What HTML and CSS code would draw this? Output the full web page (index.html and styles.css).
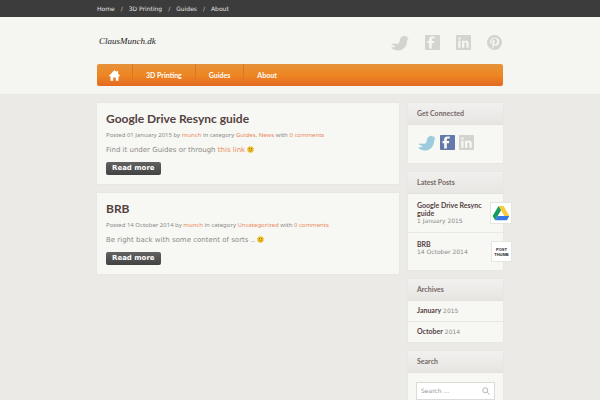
FILE: index.html
```html
<!DOCTYPE html>
<html lang="en">
<head>
<meta charset="utf-8">
<meta name="viewport" content="width=device-width, initial-scale=1">
<title>ClausMunch.dk</title>
<link rel="stylesheet" href="styles.css">
</head>
<body>
<svg class="defs" aria-hidden="true">
  <symbol id="bird" viewBox="0 0 24 20"><path d="M1 15.500c3 .3 5-.5 6.500-1.800C5 13.500 3 12.500 2 10.800c1.500.3 3 .1 4-.3C9 12 12 10.500 12.300 7 12.500 3.500 15 1 18 .8c1 0 1.500.7 2.200 1.200l2.600-.5-1.500 2.500 2.500.5-2.300 2.200C22 13 17 19.500 10 19.500c-4 0-7-1.500-9-4z"/></symbol>
  <symbol id="fb" viewBox="0 0 20 20"><path fill-rule="evenodd" d="M1 0h18q1 0 1 1v18q0 1-1 1H1q-1 0-1-1V1q0-1 1-1zM5.500 18h3.600v-7H12l.4-3H9.100V6.300c0-1 .4-1.500 1.600-1.500H13V2H10C7 2 5.500 3.500 5.500 6v2H3.300v3h2.200z"/></symbol>
  <symbol id="li" viewBox="0 0 20 20"><path fill-rule="evenodd" d="M1 0h18q1 0 1 1v18q0 1-1 1H1q-1 0-1-1V1q0-1 1-1zM3 7.500V17h3V7.500zM3 3.200V6h3V3.200zM8 7.500V17h3v-5c0-2.500 3-2.500 3 0v5h3v-6c0-4-4.500-4.500-6-2.200V7.500z"/></symbol>
  <symbol id="pin" viewBox="0 0 20 20"><path fill-rule="evenodd" d="M10 0a10 10 0 1 1 0 20A10 10 0 0 1 10 0zM7.200 18.500l.8-.3 1.500-4.500c4 2 7-1.200 6.700-5.500C16 1.500 4 1.500 4 8.500c0 1.700.7 3 2 3.500l.6-1.500C4.500 6 8 4.500 10 4.500c5.500 0 3.700 8.500.4 7.800-2.400-.5.600-3.500-.3-5.300C9 5 6.500 7 7.500 10z"/></symbol>
  <symbol id="smile" viewBox="0 0 16 16"><circle cx="8" cy="8" r="7.500" fill="#f2c52e"/><ellipse cx="5.300" cy="6" rx="1.200" ry="1.700" fill="#6b4a20"/><ellipse cx="10.700" cy="6" rx="1.200" ry="1.700" fill="#6b4a20"/><path d="M4 10q4 4 8 0" fill="none" stroke="#8a6420" stroke-width="1.300"/></symbol>
</svg>

<div class="topbar">
  <nav class="wrap topnav" aria-label="Top">
    <a href="#">Home</a><span>/</span><a href="#">3D Printing</a><span>/</span><a href="#">Guides</a><span>/</span><a href="#">About</a>
  </nav>
</div>

<header class="header">
  <div class="wrap">
    <div class="brand">
      <a class="logo" href="#">ClausMunch.dk</a>
      <div class="social">
        <a href="#" aria-label="Twitter"><svg class="bird"><use href="#bird"/></svg></a>
        <a href="#" aria-label="Facebook"><svg><use href="#fb"/></svg></a>
        <a href="#" aria-label="LinkedIn"><svg><use href="#li"/></svg></a>
        <a href="#" aria-label="Pinterest"><svg><use href="#pin"/></svg></a>
      </div>
    </div>
    <nav class="mainnav" aria-label="Main">
      <a href="#" aria-label="Front page"><svg viewBox="0 0 22 22"><path fill="#fff" d="M11 0l4 4V2h3v5l4 4.500-1.500 1.500L19 12v9.500h-5.500V15h-5v6.500H3V12l-1.500 1L0 11.500z"/></svg></a>
      <a href="#">3D Printing</a>
      <a href="#">Guides</a>
      <a href="#">About</a>
    </nav>
  </div>
</header>

<div class="wrap columns">
  <main>
    <article class="card post">
      <h2>Google Drive Resync guide</h2>
      <p class="meta">Posted 01 January 2015 by <a href="#">munch</a> in category <a href="#">Guides</a>, <a href="#">News</a> with <a href="#">0 comments</a></p>
      <p class="text">Find it under Guides or through <a href="#">this link</a> <svg><use href="#smile"/></svg></p>
      <a class="more" href="#">Read more</a>
    </article>
    <article class="card post">
      <h2>BRB</h2>
      <p class="meta">Posted 14 October 2014 by <a href="#">munch</a> in category <a href="#">Uncategorized</a> with <a href="#">0 comments</a></p>
      <p class="text">Be right back with some content of sorts .. <svg><use href="#smile"/></svg></p>
      <a class="more" href="#">Read more</a>
    </article>
  </main>

  <aside>
    <section class="card">
      <h3>Get Connected</h3>
      <div class="connect">
        <a class="tw" href="#" aria-label="Twitter"><svg class="bird"><use href="#bird"/></svg></a>
        <a class="fb" href="#" aria-label="Facebook"><svg><use href="#fb"/></svg></a>
        <a class="in" href="#" aria-label="LinkedIn"><svg><use href="#li"/></svg></a>
      </div>
    </section>
    <section class="card">
      <h3>Latest Posts</h3>
      <ul class="latest">
        <li>
          <div><a href="#">Google Drive Resync guide</a><span>1 January 2015</span></div>
          <svg class="thumb drive" viewBox="0 0 24 24"><path fill="#f8ca3c" d="M9 3.500h6l7 12h-6z"/><path fill="#159c5b" d="M9 3.500l3 5.200-7 12-3-5.200z"/><path fill="#3777e3" d="M8 15.500h14l-3 5.200H5z"/></svg>
        </li>
        <li>
          <div><a href="#">BRB</a><span>14 October 2014</span></div>
          <span class="thumb none">POST THUMB</span>
        </li>
      </ul>
    </section>
    <section class="card">
      <h3>Archives</h3>
      <ul class="archive">
        <li><a href="#">January</a> 2015</li>
        <li><a href="#">October</a> 2014</li>
      </ul>
    </section>
    <section class="card">
      <h3>Search</h3>
      <form class="search">
        <input type="search" placeholder="Search ..." aria-label="Search">
        <button type="submit" aria-label="Search"><svg viewBox="0 0 16 16"><circle cx="6.500" cy="6.500" r="5"/><path d="M10.500 10.500L15 15"/></svg></button>
      </form>
    </section>
  </aside>
</div>
</body>
</html>
```

FILE: styles.css
```css
* { box-sizing: border-box; }

body {
  margin: 0;
  background: #ebeae7;
  color: #8d8b88;
  font: 7px/12px "DejaVu Sans", sans-serif;
}

a { color: #e98a5b; text-decoration: none; }
h2, h3, p, ul { margin: 0; padding: 0; font-weight: normal; }
ul { list-style: none; }
svg { display: block; width: 15px; height: 15px; fill: currentColor; }
.defs { position: absolute; width: 0; height: 0; }
svg.bird { width: 19px; height: 16px; }

.wrap { max-width: 406px; margin: 0 auto; }

.topbar { background: #3c3c3c; }
.topnav { display: flex; gap: 6px; font-size: 6px; line-height: 17px; color: #c8c8c8; }
.topnav a { color: #e2e2e2; }

.header { background: #f5f5f2; padding-bottom: 8px; }
.brand { display: flex; justify-content: space-between; align-items: center; height: 47px; padding: 4px 1px 0 2px; }
.logo { padding-bottom: 3px; color: #222; font: italic 9px/12px "Liberation Serif", cursive; }
.social { display: flex; gap: 16px; }
.social a { color: #d3d3d0; }

.mainnav {
  display: flex;
  height: 22px;
  border-radius: 2px;
  background: linear-gradient(#e6923a, #ee8623 50%, #e36a20);
}
.mainnav a {
  display: flex;
  align-items: center;
  padding: 0 12px;
  border-right: 1px solid #d97826;
  color: #fff;
  font: bold 7px/12px "Lato", sans-serif;
}
.mainnav a + a { padding: 0 13px; }
.mainnav a:last-child { border-right: 0; }
.mainnav svg { width: 11px; height: 11px; }

.columns { display: grid; grid-template-columns: 1fr 95px; gap: 9px; padding-top: 9px; }
main, aside { display: flex; flex-direction: column; gap: 9px; }
.card {
  background: #f7f7f4;
  box-shadow: 0 0 1px #dcdbd8;
}

.post { padding: 7px 9px 9px; }
.post h2 { color: #54423f; font: bold 12px/18px "Lato", sans-serif; }
.meta { margin-top: 1px; font: 6px/12px "Noto Sans", sans-serif; }
.text { margin-top: 3px; }
.text svg { display: inline-block; width: 7px; height: 7px; vertical-align: -1px; }
.more {
  display: inline-block;
  margin-top: 6px;
  padding: 0 6px;
  border-radius: 2px;
  background: linear-gradient(#626262, #424242);
  color: #fff;
  font-weight: bold;
  line-height: 13px;
  vertical-align: top;
}

h3 {
  padding: 0 9px;
  border-bottom: 1px solid #e2e1de;
  background: linear-gradient(#f1f0ee, #e7e6e3);
  color: #756967;
  font: bold 7px/21px "Lato", sans-serif;
}
.connect { display: flex; gap: 4px; padding: 10px 9px 12px; }
.connect .tw { color: #9bcbdc; }
.connect .fb { color: #6479aa; }
.connect .in { color: #d3d3d0; }

.latest li { position: relative; height: 38px; padding: 7px 20px 0 9px; }
.latest li + li { border-top: 1px solid #e9e8e5; }
.latest a, .archive a { color: #54423f; font: bold 7px/8px "Lato", sans-serif; }
.latest a { display: block; }
.latest div span { display: block; font-size: 6px; line-height: 8px; white-space: nowrap; }
.thumb { position: absolute; top: 8px; right: -9px; width: 21px; height: 21px; background: #fff; border: 1px solid #e5e5e2; }
.thumb.drive { width: 22px; height: 22px; }
.none { padding: 5px 0; color: #222; font: bold 4px/5px "Liberation Sans", sans-serif; text-align: center; }

.archive li { padding: 0 9px; font-size: 6px; line-height: 20px; }
.archive li + li { border-top: 1px solid #e9e8e5; }

.search { display: flex; margin: 9px 8px 12px; background: #fff; border: 1px solid #dcdbd8; }
.search input { flex: 1; min-width: 0; padding: 0 4px; border: 0; background: none; color: #8d8b88; font: 6px/16px "DejaVu Sans", sans-serif; }
.search input::placeholder { color: #9a9896; }
.search button { padding: 4px; border: 0; background: none; color: #b5b3b0; }
.search svg { width: 8px; height: 8px; fill: none; stroke: currentColor; stroke-width: 2; }
```
